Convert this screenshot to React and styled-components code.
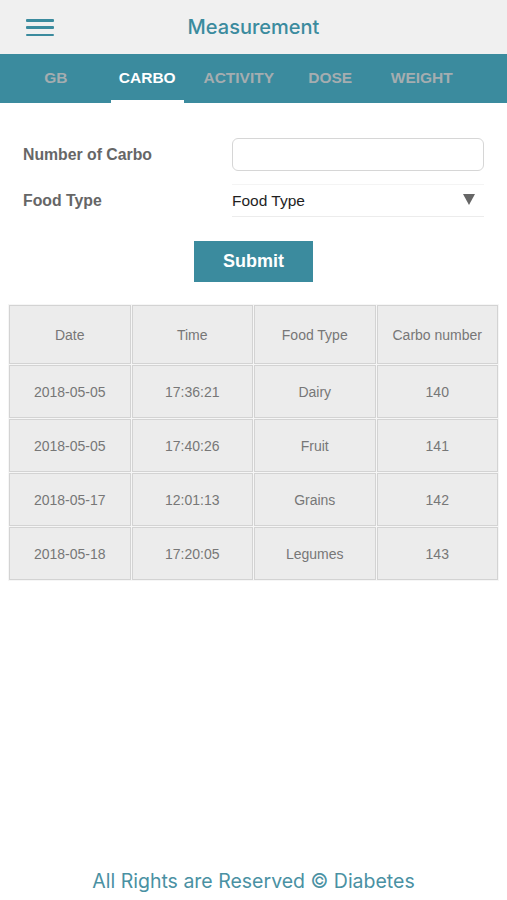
import React from "react";
import styled, { createGlobalStyle } from "styled-components";

const GlobalStyle = createGlobalStyle`
  html, body {
    margin: 0;
    padding: 0;
    background: #ffffff;
  }
  body {
    font-family: "Liberation Sans", Arial, sans-serif;
  }
`;

const teal = "#3b8b9e";

const Page = styled.div`
  min-height: 100vh;
  display: flex;
  flex-direction: column;
  background: #fff;
`;

const Header = styled.header`
  height: 54px;
  background: #f0f0f0;
  display: flex;
  align-items: center;
  justify-content: center;
  position: relative;
`;

const Burger = styled.button`
  position: absolute;
  left: 26px;
  top: 19px;
  width: 28px;
  height: 17px;
  padding: 0;
  border: 0;
  background: none;
  display: flex;
  flex-direction: column;
  justify-content: space-between;

  span {
    display: block;
    height: 2.5px;
    background: ${teal};
    border-radius: 1px;
  }
`;

const Title = styled.h1`
  margin: 0 0 1px 0;
  font-family: Inter, "Liberation Sans", sans-serif;
  font-size: 20px;
  font-weight: 500;
  color: ${teal};
`;

const TabBar = styled.nav`
  height: 49px;
  background: ${teal};
  display: flex;
  padding-left: 10px;
`;

const Tab = styled.div`
  width: 91.5px;
  position: relative;
  display: flex;
  align-items: center;
  justify-content: center;
  padding-bottom: 1px;
  font-size: 15.5px;
  font-weight: bold;
  color: ${(p) => (p.$active ? "#ffffff" : "#a5adb0")};

  &::after {
    content: "";
    display: ${(p) => (p.$active ? "block" : "none")};
    position: absolute;
    bottom: 0;
    left: 9px;
    right: 9.5px;
    height: 3.5px;
    background: #ffffff;
  }
`;

const Form = styled.form`
  padding: 35px 23px 0 23px;
  display: flex;
  flex-direction: column;
`;

const Row = styled.div`
  display: grid;
  grid-template-columns: 209px 1fr;
  align-items: center;
  margin-bottom: ${(p) => p.$gap || 0}px;
`;

const Label = styled.label`
  font-size: 15.8px;
  font-weight: bold;
  color: #666666;
`;

const Input = styled.input`
  height: 33px;
  box-sizing: border-box;
  border: 1.5px solid #d6d6d6;
  border-radius: 6px;
  background: #fff;
  font-size: 15px;
  outline: none;
`;

const Select = styled.div`
  height: 33px;
  box-sizing: border-box;
  border-top: 1px solid #f4f4f4;
  border-bottom: 1.5px solid #ececec;
  display: flex;
  align-items: center;
  justify-content: space-between;
  font-size: 15.5px;
  color: #1f1f1f;
  padding-right: 9px;
`;

const Arrow = styled.span`
  width: 0;
  height: 0;
  border-left: 6px solid transparent;
  border-right: 6px solid transparent;
  border-top: 11px solid #666666;
  margin-top: -2px;
`;

const ButtonRow = styled.div`
  display: flex;
  justify-content: center;
  margin-top: 24px;
`;

const Submit = styled.button`
  width: 119px;
  height: 41px;
  border: 0;
  background: ${teal};
  color: #fff;
  font-family: "Liberation Sans", Arial, sans-serif;
  font-size: 18px;
  font-weight: bold;
`;

const TableWrap = styled.div`
  padding: 22px 8px 0 8px;
`;

const Table = styled.div`
  display: grid;
  grid-template-columns: repeat(4, 1fr);
  gap: 1px;
  background: #f6f6f6;
  border: 1px solid #f6f6f6;
`;

const Cell = styled.div`
  height: ${(p) => (p.$head ? 57 : 51)}px;
  display: flex;
  align-items: center;
  justify-content: center;
  background: #ececec;
  border: 1px solid #d3d3d3;
  font-size: 14px;
  color: #777777;
`;

const Footer = styled.footer`
  margin-top: auto;
  padding-bottom: 7px;
  text-align: center;
  font-family: Inter, "Liberation Sans", sans-serif;
  font-size: 19.5px;
  color: #4a91a3;
`;

const tabs = ["GB", "CARBO", "ACTIVITY", "DOSE", "WEIGHT"];
const heads = ["Date", "Time", "Food Type", "Carbo number"];
const rows = [
  ["2018-05-05", "17:36:21", "Dairy", "140"],
  ["2018-05-05", "17:40:26", "Fruit", "141"],
  ["2018-05-17", "12:01:13", "Grains", "142"],
  ["2018-05-18", "17:20:05", "Legumes", "143"],
];

export default function App() {
  return (
    <>
      <GlobalStyle />
      <Page>
        <Header>
          <Burger aria-label="menu">
            <span />
            <span />
            <span />
          </Burger>
          <Title>Measurement</Title>
        </Header>
        <TabBar>
          {tabs.map((t) => (
            <Tab key={t} $active={t === "CARBO"}>
              {t}
            </Tab>
          ))}
        </TabBar>
        <Form onSubmit={(e) => e.preventDefault()}>
          <Row $gap={13}>
            <Label>Number of Carbo</Label>
            <Input type="text" />
          </Row>
          <Row>
            <Label>Food Type</Label>
            <Select>
              Food Type
              <Arrow />
            </Select>
          </Row>
          <ButtonRow>
            <Submit type="submit">Submit</Submit>
          </ButtonRow>
        </Form>
        <TableWrap>
          <Table>
            {heads.map((h) => (
              <Cell key={h} $head>
                {h}
              </Cell>
            ))}
            {rows.map((r, i) =>
              r.map((c, j) => <Cell key={i + "-" + j}>{c}</Cell>)
            )}
          </Table>
        </TableWrap>
        <Footer>All Rights are Reserved © Diabetes</Footer>
      </Page>
    </>
  );
}
